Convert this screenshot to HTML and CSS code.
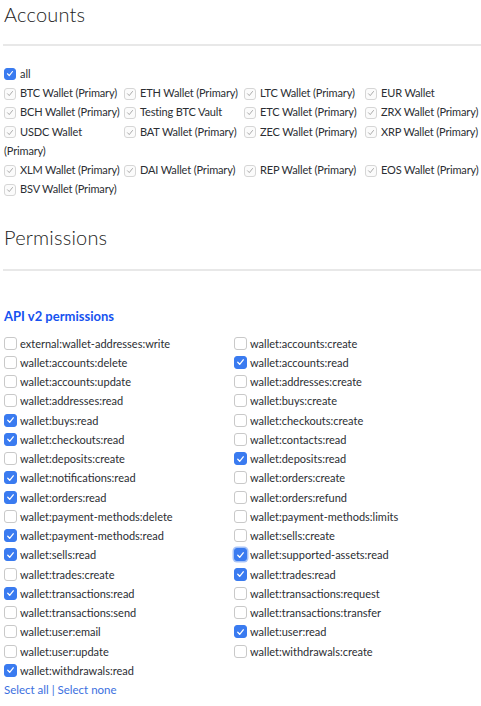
FILE: index.html
```html
<!DOCTYPE html>
<html>
<head>
<meta charset="utf-8">
<link rel="stylesheet" href="styles.css">
</head>
<body>
<div class="page">
  <h2 class="section-title">Accounts</h2>
  <div class="rule"></div>

  <div class="row all-row">
    <span class="cb cb-on"><svg viewBox="0 0 12 12"><path d="M3 6.3 L5.1 8.5 L9 3.6"/></svg></span>
    <span class="lbl">all</span>
  </div>
  <div class="accounts">
    <div class="acct"><span class="cb cb-dis"><svg viewBox="0 0 12 12"><path d="M3 6.3 L5.1 8.5 L9 3.6"/></svg></span>BTC Wallet (Primary)</div>
    <div class="acct"><span class="cb cb-dis"><svg viewBox="0 0 12 12"><path d="M3 6.3 L5.1 8.5 L9 3.6"/></svg></span>ETH Wallet (Primary)</div>
    <div class="acct"><span class="cb cb-dis"><svg viewBox="0 0 12 12"><path d="M3 6.3 L5.1 8.5 L9 3.6"/></svg></span>LTC Wallet (Primary)</div>
    <div class="acct"><span class="cb cb-dis"><svg viewBox="0 0 12 12"><path d="M3 6.3 L5.1 8.5 L9 3.6"/></svg></span>EUR Wallet</div>
    <div class="acct"><span class="cb cb-dis"><svg viewBox="0 0 12 12"><path d="M3 6.3 L5.1 8.5 L9 3.6"/></svg></span>BCH Wallet (Primary)</div>
    <div class="acct"><span class="cb cb-dis"><svg viewBox="0 0 12 12"><path d="M3 6.3 L5.1 8.5 L9 3.6"/></svg></span>Testing BTC Vault</div>
    <div class="acct"><span class="cb cb-dis"><svg viewBox="0 0 12 12"><path d="M3 6.3 L5.1 8.5 L9 3.6"/></svg></span>ETC Wallet (Primary)</div>
    <div class="acct"><span class="cb cb-dis"><svg viewBox="0 0 12 12"><path d="M3 6.3 L5.1 8.5 L9 3.6"/></svg></span>ZRX Wallet (Primary)</div>
    <div class="acct"><span class="cb cb-dis"><svg viewBox="0 0 12 12"><path d="M3 6.3 L5.1 8.5 L9 3.6"/></svg></span>USDC Wallet<br>(Primary)</div>
    <div class="acct"><span class="cb cb-dis"><svg viewBox="0 0 12 12"><path d="M3 6.3 L5.1 8.5 L9 3.6"/></svg></span>BAT Wallet (Primary)</div>
    <div class="acct"><span class="cb cb-dis"><svg viewBox="0 0 12 12"><path d="M3 6.3 L5.1 8.5 L9 3.6"/></svg></span>ZEC Wallet (Primary)</div>
    <div class="acct"><span class="cb cb-dis"><svg viewBox="0 0 12 12"><path d="M3 6.3 L5.1 8.5 L9 3.6"/></svg></span>XRP Wallet (Primary)</div>
    <div class="acct"><span class="cb cb-dis"><svg viewBox="0 0 12 12"><path d="M3 6.3 L5.1 8.5 L9 3.6"/></svg></span>XLM Wallet (Primary)</div>
    <div class="acct"><span class="cb cb-dis"><svg viewBox="0 0 12 12"><path d="M3 6.3 L5.1 8.5 L9 3.6"/></svg></span>DAI Wallet (Primary)</div>
    <div class="acct"><span class="cb cb-dis"><svg viewBox="0 0 12 12"><path d="M3 6.3 L5.1 8.5 L9 3.6"/></svg></span>REP Wallet (Primary)</div>
    <div class="acct"><span class="cb cb-dis"><svg viewBox="0 0 12 12"><path d="M3 6.3 L5.1 8.5 L9 3.6"/></svg></span>EOS Wallet (Primary)</div>
    <div class="acct"><span class="cb cb-dis"><svg viewBox="0 0 12 12"><path d="M3 6.3 L5.1 8.5 L9 3.6"/></svg></span>BSV Wallet (Primary)</div>
  </div>

  <h2 class="section-title perm-title">Permissions</h2>
  <div class="rule rule-perm"></div>

  <h3 class="api-title">API v2 permissions</h3>
  <div class="perms">
    <div class="perm"><span class="cb"></span>external:wallet-addresses:write</div>
    <div class="perm"><span class="cb"></span>wallet:accounts:create</div>
    <div class="perm"><span class="cb"></span>wallet:accounts:delete</div>
    <div class="perm"><span class="cb cb-on"><svg viewBox="0 0 12 12"><path d="M3 6.3 L5.1 8.5 L9 3.6"/></svg></span>wallet:accounts:read</div>
    <div class="perm"><span class="cb"></span>wallet:accounts:update</div>
    <div class="perm"><span class="cb"></span>wallet:addresses:create</div>
    <div class="perm"><span class="cb"></span>wallet:addresses:read</div>
    <div class="perm"><span class="cb"></span>wallet:buys:create</div>
    <div class="perm"><span class="cb cb-on"><svg viewBox="0 0 12 12"><path d="M3 6.3 L5.1 8.5 L9 3.6"/></svg></span>wallet:buys:read</div>
    <div class="perm"><span class="cb"></span>wallet:checkouts:create</div>
    <div class="perm"><span class="cb cb-on"><svg viewBox="0 0 12 12"><path d="M3 6.3 L5.1 8.5 L9 3.6"/></svg></span>wallet:checkouts:read</div>
    <div class="perm"><span class="cb"></span>wallet:contacts:read</div>
    <div class="perm"><span class="cb"></span>wallet:deposits:create</div>
    <div class="perm"><span class="cb cb-on"><svg viewBox="0 0 12 12"><path d="M3 6.3 L5.1 8.5 L9 3.6"/></svg></span>wallet:deposits:read</div>
    <div class="perm"><span class="cb cb-on"><svg viewBox="0 0 12 12"><path d="M3 6.3 L5.1 8.5 L9 3.6"/></svg></span>wallet:notifications:read</div>
    <div class="perm"><span class="cb"></span>wallet:orders:create</div>
    <div class="perm"><span class="cb cb-on"><svg viewBox="0 0 12 12"><path d="M3 6.3 L5.1 8.5 L9 3.6"/></svg></span>wallet:orders:read</div>
    <div class="perm"><span class="cb"></span>wallet:orders:refund</div>
    <div class="perm"><span class="cb"></span>wallet:payment-methods:delete</div>
    <div class="perm"><span class="cb"></span>wallet:payment-methods:limits</div>
    <div class="perm"><span class="cb cb-on"><svg viewBox="0 0 12 12"><path d="M3 6.3 L5.1 8.5 L9 3.6"/></svg></span>wallet:payment-methods:read</div>
    <div class="perm"><span class="cb"></span>wallet:sells:create</div>
    <div class="perm"><span class="cb cb-on"><svg viewBox="0 0 12 12"><path d="M3 6.3 L5.1 8.5 L9 3.6"/></svg></span>wallet:sells:read</div>
    <div class="perm"><span class="cb cb-on cb-focus"><svg viewBox="0 0 12 12"><path d="M3 6.3 L5.1 8.5 L9 3.6"/></svg></span>wallet:supported-assets:read</div>
    <div class="perm"><span class="cb"></span>wallet:trades:create</div>
    <div class="perm"><span class="cb cb-on"><svg viewBox="0 0 12 12"><path d="M3 6.3 L5.1 8.5 L9 3.6"/></svg></span>wallet:trades:read</div>
    <div class="perm"><span class="cb cb-on"><svg viewBox="0 0 12 12"><path d="M3 6.3 L5.1 8.5 L9 3.6"/></svg></span>wallet:transactions:read</div>
    <div class="perm"><span class="cb"></span>wallet:transactions:request</div>
    <div class="perm"><span class="cb"></span>wallet:transactions:send</div>
    <div class="perm"><span class="cb"></span>wallet:transactions:transfer</div>
    <div class="perm"><span class="cb"></span>wallet:user:email</div>
    <div class="perm"><span class="cb cb-on"><svg viewBox="0 0 12 12"><path d="M3 6.3 L5.1 8.5 L9 3.6"/></svg></span>wallet:user:read</div>
    <div class="perm"><span class="cb"></span>wallet:user:update</div>
    <div class="perm"><span class="cb"></span>wallet:withdrawals:create</div>
    <div class="perm"><span class="cb cb-on"><svg viewBox="0 0 12 12"><path d="M3 6.3 L5.1 8.5 L9 3.6"/></svg></span>wallet:withdrawals:read</div>
  </div>
  <div class="select-links"><a href="#">Select all</a> | <a href="#">Select none</a></div>
</div>
</body>
</html>
```

FILE: styles.css
```css
html, body {
  margin: 0;
  padding: 0;
  background: #ffffff;
}

body {
  font-family: "Lato", "Open Sans", "DejaVu Sans", sans-serif;
  color: #2b2e33;
  font-size: 11px;
  overflow: hidden;
}

.page {
  padding: 0 0 0 4px;
}

.section-title {
  margin: 2px 0 0 0;
  font-size: 20px;
  line-height: 24px;
  font-weight: 300;
  color: #222;
  letter-spacing: 0.2px;
}

.rule {
  height: 2px;
  background: #e8e8e8;
  margin: 18px 0 0 -1px;
}

.row {
  display: flex;
  align-items: center;
  height: 19.2px;
}

.all-row {
  margin-top: 18px;
}

.cb {
  flex: none;
  display: inline-flex;
  align-items: center;
  justify-content: center;
  width: 12px;
  height: 12px;
  border: 1px solid #c9c9c9;
  border-radius: 3px;
  background: #fff;
  box-sizing: border-box;
  margin-right: 4px;
  vertical-align: -2px;
}

.cb svg {
  width: 11px;
  height: 11px;
}

.cb svg path {
  fill: none;
  stroke-width: 1.4;
  stroke-linecap: round;
  stroke-linejoin: round;
}

.cb-on {
  background: #3a7bf0;
  border-color: #3a7bf0;
}

.cb-on svg path {
  stroke: #ffffff;
}

.cb-dis {
  border-color: #d6d6d6;
  background: #fbfbfb;
}

.cb-dis svg path {
  stroke: #9a9a9a;
  stroke-width: 1;
}

.cb-focus {
  box-shadow: 0 0 0 1.5px rgba(58, 123, 240, 0.45);
}

.accounts {
  display: grid;
  grid-template-columns: 120px 120px 121px 121px;
  align-items: start;
}

.acct {
  line-height: 19.2px;
  white-space: nowrap;
  letter-spacing: -0.15px;
}

.perm-title {
  margin-top: 27px;
}

.rule-perm {
  margin-top: 20px;
}

.api-title {
  margin: 37px 0 0 0;
  font-size: 13px;
  line-height: 16px;
  font-weight: 700;
  color: #1652f0;
}

.perms {
  margin-top: 9px;
  display: grid;
  grid-template-columns: 230px 230px;
}

.perm {
  display: flex;
  align-items: center;
  height: 19.25px;
  white-space: nowrap;
}

.perm .cb {
  width: 13px;
  height: 13px;
  margin-right: 3px;
}

.perm .cb svg {
  width: 12px;
  height: 12px;
}

.select-links {
  margin-top: 0;
  line-height: 19px;
  font-size: 11.5px;
  color: #3b6fe0;
}

.select-links a {
  color: #3b6fe0;
  text-decoration: none;
}
```
